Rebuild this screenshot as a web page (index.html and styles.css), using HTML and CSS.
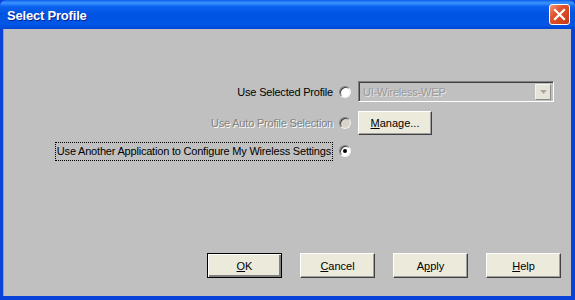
FILE: index.html
```html
<!DOCTYPE html>
<html lang="en">
<head>
    <meta charset="UTF-8">
    <title>Select Profile</title>
    <link rel="stylesheet" href="styles.css">
</head>
<body>
    <div class="window">
        <div class="title-bar">
            <p class="title">Select Profile</p>
            <div class="close-btn">
                <svg width="13" height="13" viewBox="0 0 13 13">
                    <path d="M2 2 L11 11 M11 2 L2 11" stroke="#fff" stroke-width="2.2" stroke-linecap="square"/>
                </svg>
            </div>
        </div>
        <div class="content">
            <div class="options">
                <div class="option-row row-selected">
                    <span class="label">Use Selected Profile</span>
                    <span class="radio"></span>
                    <div class="control">
                        <div class="combo">
                            <span class="combo-text">UI-Wireless-WEP</span>
                            <span class="combo-arrow">
                                <svg width="7" height="4" viewBox="0 0 7 4"><path d="M0 0 H7 L3.5 4 Z" fill="#a9a9a9"/></svg>
                            </span>
                        </div>
                    </div>
                </div>
                <div class="option-row row-auto">
                    <span class="label disabled">Use Auto Profile Selection</span>
                    <span class="radio radio-disabled"></span>
                    <div class="control">
                        <button class="btn btn-manage"><u>M</u>anage...</button>
                    </div>
                </div>
                <div class="option-row row-another">
                    <span class="label focused">Use Another Application to Configure My Wireless Settings</span>
                    <span class="radio checked"></span>
                    <div class="control"></div>
                </div>
            </div>
            <div class="buttons">
                <button class="btn btn-default"><u>O</u>K</button>
                <button class="btn"><u>C</u>ancel</button>
                <button class="btn">A<u>p</u>ply</button>
                <button class="btn"><u>H</u>elp</button>
            </div>
        </div>
    </div>
</body>
</html>
```
FILE: styles.css
```css
* {
    box-sizing: border-box;
    margin: 0;
    padding: 0;
}

body {
    width: 575px;
    height: 300px;
    font-family: 'Liberation Sans', Arial, sans-serif;
    font-size: 11px;
    color: #000;
    overflow: hidden;
}

.window {
    width: 575px;
    height: 300px;
    display: flex;
    flex-direction: column;
    background: #0842d8;
}

.title-bar {
    height: 29px;
    display: flex;
    align-items: center;
    justify-content: space-between;
    padding: 0 5px 0 7px;
    background: linear-gradient(to bottom, #0a5ee8 0%, #3d95ff 10%, #0d64f0 22%, #0054e3 45%, #0056e6 85%, #0046d3 100%);
    border-radius: 6px 6px 0 0;
}

.title {
    color: #fff;
    font-weight: bold;
    font-size: 13px;
    letter-spacing: -0.2px;
    text-shadow: 1px 1px #0a1e8c;
    padding-top: 1px;
}

.close-btn {
    width: 21px;
    height: 21px;
    display: flex;
    justify-content: center;
    align-items: center;
    border: 1px solid #fff;
    border-radius: 3px;
    background: linear-gradient(135deg, #f09a7a 0%, #e0552e 35%, #d2431c 75%, #c2391a 100%);
}

.content {
    flex: 1;
    display: flex;
    flex-direction: column;
    justify-content: space-between;
    background: #c0c0c0;
    margin: 0 4px 4px 3px;
    border-left: 1px solid #7d9fec;
}

.options {
    display: flex;
    flex-direction: column;
    padding: 52px 17px 0 0;
}

.option-row {
    display: flex;
    align-items: center;
    justify-content: flex-end;
}

.row-selected {
    height: 21px;
}

.row-auto {
    height: 24px;
    margin-top: 9px;
}

.row-another {
    height: 20px;
    margin-top: 6px;
}

.label {
    white-space: nowrap;
    letter-spacing: -0.2px;
    margin-right: 6px;
}

.label.disabled {
    color: #808080;
    text-shadow: 1px 1px #fff;
}

.label.focused {
    border: 1px dotted #000;
    padding: 2px 1px 3px 1px;
}

.radio {
    width: 12px;
    height: 12px;
    border-radius: 50%;
    background: #fff;
    border: 1px solid;
    border-color: #808080 #f0f0f0 #f0f0f0 #808080;
    box-shadow: inset 1px 1px #404040;
    display: flex;
    justify-content: center;
    align-items: center;
    margin-right: 7px;
}

.radio-disabled {
    background: #d8d4c8;
}

.radio.checked::after {
    content: "";
    width: 4px;
    height: 4px;
    border-radius: 50%;
    background: #000;
}

.control {
    width: 196px;
    display: flex;
}

.combo {
    width: 196px;
    height: 21px;
    display: flex;
    align-items: center;
    justify-content: space-between;
    border: 1px solid;
    border-color: #808080 #fff #fff #808080;
    box-shadow: inset 1px 1px #404040;
    padding: 2px 2px 2px 4px;
}

.combo-text {
    color: #9a9a9a;
    letter-spacing: -0.2px;
    text-shadow: 1px 1px #e6e6e6;
}

.combo-arrow {
    width: 16px;
    height: 16px;
    display: flex;
    justify-content: center;
    align-items: center;
    background: #e6e4d8;
    border: 1px solid;
    border-color: #f4f4f0 #8a8a8a #8a8a8a #f4f4f0;
}

.btn {
    font-family: 'Liberation Sans', Arial, sans-serif;
    font-size: 11px;
    color: #000;
    background: #eceadb;
    border: 1px solid;
    border-color: #fff #404040 #404040 #fff;
    box-shadow: inset -1px -1px #a0a0a0;
}

.btn-manage {
    width: 74px;
    height: 24px;
}

.buttons {
    display: flex;
    justify-content: flex-end;
    gap: 18px;
    padding: 0 10px 18px 0;
}

.buttons .btn {
    width: 75px;
    height: 25px;
}

.btn-default {
    border-color: #000;
    box-shadow: inset 1px 1px #fff, inset -2px -2px #808080;
}
```
